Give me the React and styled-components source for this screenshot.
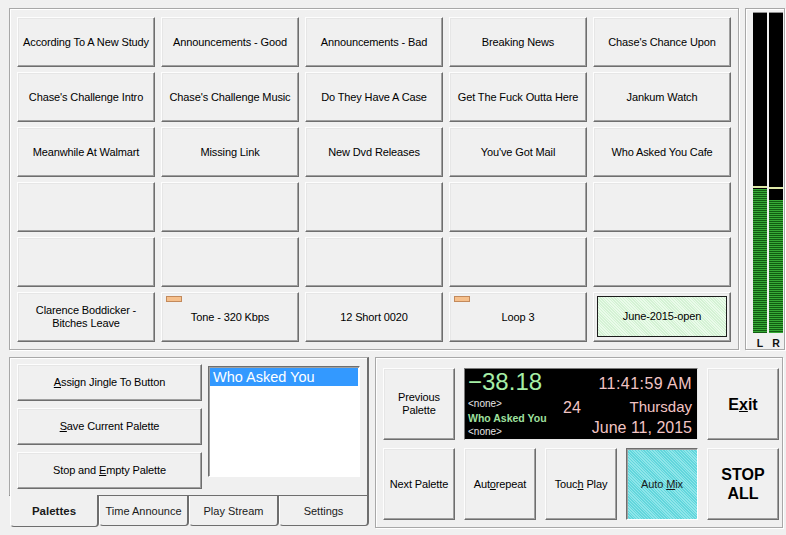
import React from 'react';
import styled, { createGlobalStyle, css } from 'styled-components';

const Global = createGlobalStyle`
  html, body { margin: 0; padding: 0; background: #f0f0f0; }
  body {
    font-family: "Liberation Sans", Arial, sans-serif;
    width: 786px; height: 535px; overflow: hidden;
  }
  * { box-sizing: border-box; }
`;

const etched = css`
  border: 1px solid #a8a8a8;
  box-shadow: inset 1px 1px 0 #fff, 1px 1px 0 #fff;
`;

const raised = css`
  border: 1px solid;
  border-color: #fdfdfd #6e6e6e #6e6e6e #fdfdfd;
  box-shadow: inset -1px -1px 0 #a0a0a0, inset 1px 1px 0 #e6e6e6;
`;

const sunken = css`
  border: 1px solid;
  border-color: #6e6e6e #fff #fff #6e6e6e;
  box-shadow: inset 1px 1px 0 #a0a0a0;
`;

const Page = styled.div`
  display: flex;
  flex-direction: column;
  gap: 7px;
  padding: 8px 0 0 9px;
  width: 786px;
  height: 535px;
`;

const Row = styled.div`
  display: flex;
  gap: 6px;
  align-items: flex-start;
`;

const PalettePanel = styled.div`
  ${etched}
  width: 730px;
  height: 342px;
  padding: 8px 7px;
  display: grid;
  grid-template-columns: repeat(5, 138px);
  grid-auto-rows: 50px;
  column-gap: 6px;
  row-gap: 5px;
`;

const BaseButton = styled.button`
  ${raised}
  position: relative;
  margin: 0;
  background: #f0f0f0;
  color: #000;
  font-family: "Liberation Sans", Arial, sans-serif;
  font-size: 11px;
  letter-spacing: -0.12px;
  line-height: 13px;
  text-align: center;
  padding: 0 3px;
  cursor: default;
  outline: none;
  display: flex;
  align-items: center;
  justify-content: center;
`;

const JingleButton = styled(BaseButton)`
  padding: ${(p) => (p.$active ? '3px 3px 4px 3px' : '0 3px')};
`;

const ActiveFace = styled.span`
  flex: 1;
  align-self: stretch;
  display: flex;
  align-items: center;
  justify-content: center;
  border: 1px solid #1c1c1c;
  background: repeating-linear-gradient(45deg, #d4f2d4 0 1px, #eafbea 1px 2px);
`;

const Marker = styled.span`
  position: absolute;
  top: 3px;
  left: 4px;
  width: 16px;
  height: 6px;
  background: #f6c08c;
  border: 1px solid #c38a5c;
`;

const MeterPanel = styled.div`
  ${etched}
  width: 40px;
  height: 342px;
  padding: 3px 0 0 7px;
  display: flex;
  flex-direction: column;
`;

const MeterBars = styled.div`
  display: flex;
  gap: 2px;
`;

const MeterTrack = styled.div`
  width: 14px;
  height: 321px;
  background: #000;
  border-top: 1px solid #909090;
  display: flex;
  flex-direction: column;
  justify-content: flex-end;
`;

const Peak = styled.div`
  height: 2px;
  background: #dfe8a8;
`;

const Level = styled.div`
  background: repeating-linear-gradient(to bottom, #36aa36 0 1px, #125c12 1px 2px);
`;

const MeterLabels = styled.div`
  display: flex;
  gap: 2px;
  margin-top: 4px;
`;

const MeterLabel = styled.span`
  width: 14px;
  text-align: center;
  font-size: 10.5px;
  font-weight: bold;
  line-height: 12px;
  color: #111;
`;

const TabPanel = styled.div`
  width: 360px;
  height: 173px;
  display: flex;
  flex-direction: column;
`;

const TabContent = styled.div`
  height: 139px;
  border: 1px solid;
  border-color: #a8a8a8 #6e6e6e #6e6e6e #a8a8a8;
  border-right-width: 2px;
  box-shadow: inset 1px 1px 0 #fff;
  padding: 6px 7px 0 7px;
  display: flex;
  gap: 6px;
  align-items: flex-start;
`;

const ButtonColumn = styled.div`
  width: 185px;
  display: flex;
  flex-direction: column;
  gap: 7px;
`;

const PaletteButton = styled(BaseButton)`
  height: 37px;
`;

const ListBox = styled.div`
  ${sunken}
  width: 152px;
  height: 111px;
  margin-top: 2px;
  background: #fff;
  padding: 1px;
`;

const ListItem = styled.div`
  background: ${(p) => (p.$selected ? '#3399ff' : 'transparent')};
  color: ${(p) => (p.$selected ? '#fff' : '#000')};
  font-size: 14.5px;
  line-height: 18px;
  height: 18px;
  padding-left: 3px;
`;

const TabStrip = styled.div`
  display: flex;
  padding-left: 1px;
`;

const Tab = styled.div`
  position: relative;
  width: ${(p) => p.$w}px;
  height: ${(p) => (p.$active ? 32 : 30)}px;
  margin-top: ${(p) => (p.$active ? -1 : 0)}px;
  background: #f0f0f0;
  border: 1px solid;
  border-top: none;
  border-color: #a8a8a8 #6e6e6e #6e6e6e #fff;
  border-right-width: 2px;
  border-radius: 0 0 4px 4px;
  display: flex;
  align-items: center;
  justify-content: center;
  font-size: ${(p) => (p.$active ? 11.5 : 11)}px;
  font-weight: ${(p) => (p.$active ? 'bold' : 'normal')};
  color: #1a1a1a;
  padding-top: ${(p) => (p.$active ? 1 : 0)}px;
  z-index: ${(p) => (p.$active ? 1 : 0)};
`;

const ControlPanel = styled.div`
  ${etched}
  width: 408px;
  height: 171px;
  padding: 10px 0 0 7px;
  display: grid;
  grid-template-columns: repeat(5, 72px);
  grid-template-rows: 72px 72px;
  column-gap: 9px;
  row-gap: 8px;
`;

const ControlButton = styled(BaseButton)`
  font-size: ${(p) => (p.$big ? 16 : 11)}px;
  font-weight: ${(p) => (p.$big ? 'bold' : 'normal')};
  letter-spacing: ${(p) => (p.$big ? 0 : -0.12)}px;
  line-height: ${(p) => (p.$big ? 19 : 13)}px;
  ${(p) =>
    p.$pressed &&
    css`
      ${sunken}
      background: repeating-linear-gradient(45deg, #62d6dc 0 1px, #8fe6ea 1px 2px);
      color: #1a1a1a;
    `}
`;

const Display = styled.div`
  grid-column: 2 / span 3;
  border: 1px solid;
  border-color: #7a7a7a #e8e8e8 #e8e8e8 #7a7a7a;
  background: #000;
  padding: 1px 5px 0 3px;
  display: flex;
  overflow: hidden;
`;

const DisplayLeft = styled.div`
  width: 95px;
  display: flex;
  flex-direction: column;
`;

const BigTime = styled.div`
  font-size: 24px;
  line-height: 24px;
  color: #a6eea6;
  white-space: nowrap;
`;

const SmallLines = styled.div`
  margin-top: 3px;
  display: flex;
  flex-direction: column;
`;

const SmallLine = styled.div`
  font-size: ${(p) => (p.$bold ? 10.5 : 10)}px;
  font-weight: ${(p) => (p.$bold ? 'bold' : 'normal')};
  line-height: ${(p) => p.$lh || 14}px;
  color: ${(p) => (p.$bold ? '#9fe09f' : '#e6e6e6')};
  white-space: nowrap;
`;

const Count = styled.div`
  margin-top: 30px;
  font-size: 16px;
  line-height: 16px;
  color: #f2c4c4;
`;

const DisplayRight = styled.div`
  margin-left: auto;
  display: flex;
  flex-direction: column;
  align-items: flex-end;
  color: #f2c4c4;
  white-space: nowrap;
`;

const Clock = styled.div`
  margin-top: 6px;
  font-size: 16px;
  line-height: 16px;
  letter-spacing: 0.45px;
`;

const Weekday = styled.div`
  margin-top: 7px;
  font-size: 15px;
  line-height: 16px;
`;

const DateLine = styled.div`
  margin-top: 5px;
  font-size: 16px;
  line-height: 16px;
`;

const jingles = [
  { label: 'According To A New Study' },
  { label: 'Announcements - Good' },
  { label: 'Announcements - Bad' },
  { label: 'Breaking News' },
  { label: "Chase's Chance Upon" },
  { label: "Chase's Challenge Intro" },
  { label: "Chase's Challenge Music" },
  { label: 'Do They Have A Case' },
  { label: 'Get The Fuck Outta Here' },
  { label: 'Jankum Watch' },
  { label: 'Meanwhile At Walmart' },
  { label: 'Missing Link' },
  { label: 'New Dvd Releases' },
  { label: "You've Got Mail" },
  { label: 'Who Asked You Cafe' },
  { label: '' }, { label: '' }, { label: '' }, { label: '' }, { label: '' },
  { label: '' }, { label: '' }, { label: '' }, { label: '' }, { label: '' },
  { label: 'Clarence Boddicker - Bitches Leave' },
  { label: 'Tone - 320 Kbps', marker: true },
  { label: '12 Short 0020' },
  { label: 'Loop 3', marker: true },
  { label: 'June-2015-open', active: true },
];

const meters = [
  { name: 'L', gap: 1, level: 144 },
  { name: 'R', gap: 11, level: 133 },
];

const tabs = [
  { label: 'Palettes', w: 89, active: true },
  { label: 'Time Announce', w: 90 },
  { label: 'Play Stream', w: 90 },
  { label: 'Settings', w: 90 },
];

export default function App() {
  return (
    <>
      <Global />
      <Page>
        <Row>
          <PalettePanel>
            {jingles.map((j, i) => (
              <JingleButton key={i} $active={j.active}>
                {j.marker && <Marker />}
                {j.active ? <ActiveFace>{j.label}</ActiveFace> : j.label}
              </JingleButton>
            ))}
          </PalettePanel>
          <MeterPanel>
            <MeterBars>
              {meters.map((m) => (
                <MeterTrack key={m.name}>
                  <Peak />
                  <div style={{ height: m.gap }} />
                  <Level style={{ height: m.level }} />
                </MeterTrack>
              ))}
            </MeterBars>
            <MeterLabels>
              {meters.map((m) => (
                <MeterLabel key={m.name}>{m.name}</MeterLabel>
              ))}
            </MeterLabels>
          </MeterPanel>
        </Row>
        <Row>
          <TabPanel>
            <TabContent>
              <ButtonColumn>
                <PaletteButton><span><u>A</u>ssign Jingle To Button</span></PaletteButton>
                <PaletteButton><span><u>S</u>ave Current Palette</span></PaletteButton>
                <PaletteButton><span>Stop and <u>E</u>mpty Palette</span></PaletteButton>
              </ButtonColumn>
              <ListBox>
                <ListItem $selected>Who Asked You</ListItem>
              </ListBox>
            </TabContent>
            <TabStrip>
              {tabs.map((t) => (
                <Tab key={t.label} $w={t.w} $active={t.active}>{t.label}</Tab>
              ))}
            </TabStrip>
          </TabPanel>
          <ControlPanel>
            <ControlButton>Previous Palette</ControlButton>
            <Display>
              <DisplayLeft>
                <BigTime>−38.18</BigTime>
                <SmallLines>
                  <SmallLine>&lt;none&gt;</SmallLine>
                  <SmallLine $bold>Who Asked You</SmallLine>
                  <SmallLine $lh={13}>&lt;none&gt;</SmallLine>
                </SmallLines>
              </DisplayLeft>
              <Count>24</Count>
              <DisplayRight>
                <Clock>11:41:59 AM</Clock>
                <Weekday>Thursday</Weekday>
                <DateLine>June 11, 2015</DateLine>
              </DisplayRight>
            </Display>
            <ControlButton $big><span>E<u>x</u>it</span></ControlButton>
            <ControlButton>Next Palette</ControlButton>
            <ControlButton><span>Aut<u>o</u>repeat</span></ControlButton>
            <ControlButton><span>Touc<u>h</u> Play</span></ControlButton>
            <ControlButton $pressed><span>Auto <u>M</u>ix</span></ControlButton>
            <ControlButton $big>STOP<br />ALL</ControlButton>
          </ControlPanel>
        </Row>
      </Page>
    </>
  );
}
